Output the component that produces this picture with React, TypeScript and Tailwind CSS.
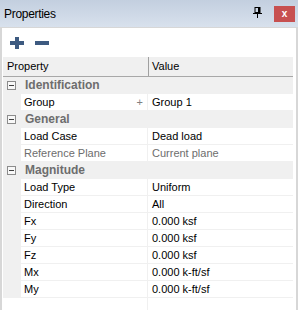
import React from "react";

const font = { fontFamily: '"Liberation Sans", Arial, sans-serif' };

function CatRow({ label }: { label: string }) {
  return (
    <div className="flex h-[17px] items-center bg-[#f0f0f0] border-b border-[#f0f0f0]">
      <div className="ml-[4px] flex h-[9px] w-[9px] items-center justify-center border border-[#8c8c8c] bg-[#f8f8f8]">
        <div className="h-px w-[5px] bg-[#404040]" />
      </div>
      <span className="ml-[9px] text-[12px] font-bold leading-none text-[#6d6d6d]">{label}</span>
    </div>
  );
}

function PropRow({
  name,
  value,
  muted,
  plus,
}: {
  name: string;
  value: string;
  muted?: boolean;
  plus?: boolean;
}) {
  const color = muted ? "text-[#6d6d6d]" : "text-black";
  return (
    <div className="flex h-[17px] border-b border-[#f0f0f0]">
      <div className="w-[18px] bg-[#f0f0f0]" />
      <div className={`flex w-[127px] items-center justify-between border-r border-[#f0f0f0] bg-white pl-[3px] pr-[4px] text-[11px] leading-none ${color}`}>
        <span>{name}</span>
        {plus && <span className="text-[11px] text-[#808080]">+</span>}
      </div>
      <div className={`flex flex-1 items-center bg-white pl-[4px] text-[11px] leading-none ${color}`}>{value}</div>
    </div>
  );
}

export default function App() {
  return (
    <div className="flex h-[310px] w-[298px] flex-col overflow-hidden bg-white" style={font}>
      {/* Title bar */}
      <div className="flex h-[27px] items-center bg-gradient-to-b from-[#c3cfdf] to-[#d8e1ed] pl-[4px] pr-[3px]">
        <span className="text-[12px] tracking-[-0.3px] text-black">Properties</span>
        <div className="flex-1" />
        <svg width="9" height="11" viewBox="0 0 9 11" className="mr-[12px] mt-[-2px]">
          <rect x="2" y="0.5" width="5" height="5" fill="none" stroke="black" strokeWidth="1" />
          <rect x="5" y="0.5" width="2" height="5" fill="black" />
          <rect x="0" y="6" width="9" height="1" fill="black" />
          <rect x="4" y="7" width="1" height="4" fill="black" />
        </svg>
        <div className="flex h-[16px] w-[21px] items-center justify-center bg-[#c75050]">
          <span className="text-[10px] font-bold leading-none text-white">x</span>
        </div>
      </div>
      {/* Content */}
      <div className="flex flex-1 flex-col border-x-2 border-t border-[#d7d7d7] bg-white">
        <div className="flex h-[29px] items-start pt-[9px]">
          <svg width="14" height="12" viewBox="0 0 14 12" className="ml-[8px]">
            <rect x="5" y="0" width="4" height="12" fill="#3d5a80" />
            <rect x="0" y="4" width="14" height="4" fill="#3d5a80" />
          </svg>
          <svg width="14" height="4" viewBox="0 0 14 4" className="ml-[11px] mt-[4px]">
            <rect x="0" y="0" width="14" height="4" fill="#3d5a80" />
          </svg>
        </div>
        <div className="ml-px mr-[3px] flex flex-col">
          <div className="flex h-[20px] border-b border-[#a8a8a8] bg-[#f0f0f0] text-[11px] text-black">
            <div className="flex w-[146px] items-center border-r border-[#a0a0a0] pl-[4px]">Property</div>
            <div className="flex flex-1 items-center pl-[3px]">Value</div>
          </div>
          <CatRow label="Identification" />
          <PropRow name="Group" value="Group 1" plus />
          <CatRow label="General" />
          <PropRow name="Load Case" value="Dead load" />
          <PropRow name="Reference Plane" value="Current plane" muted />
          <CatRow label="Magnitude" />
          <PropRow name="Load Type" value="Uniform" />
          <PropRow name="Direction" value="All" />
          <PropRow name="Fx" value="0.000 ksf" />
          <PropRow name="Fy" value="0.000 ksf" />
          <PropRow name="Fz" value="0.000 ksf" />
          <PropRow name="Mx" value="0.000 k-ft/sf" />
          <PropRow name="My" value="0.000 k-ft/sf" />
        </div>
        <div className="ml-px mr-[3px] flex flex-1">
          <div className="w-[145px] border-r border-[#f0f0f0]" />
        </div>
      </div>
    </div>
  );
}
